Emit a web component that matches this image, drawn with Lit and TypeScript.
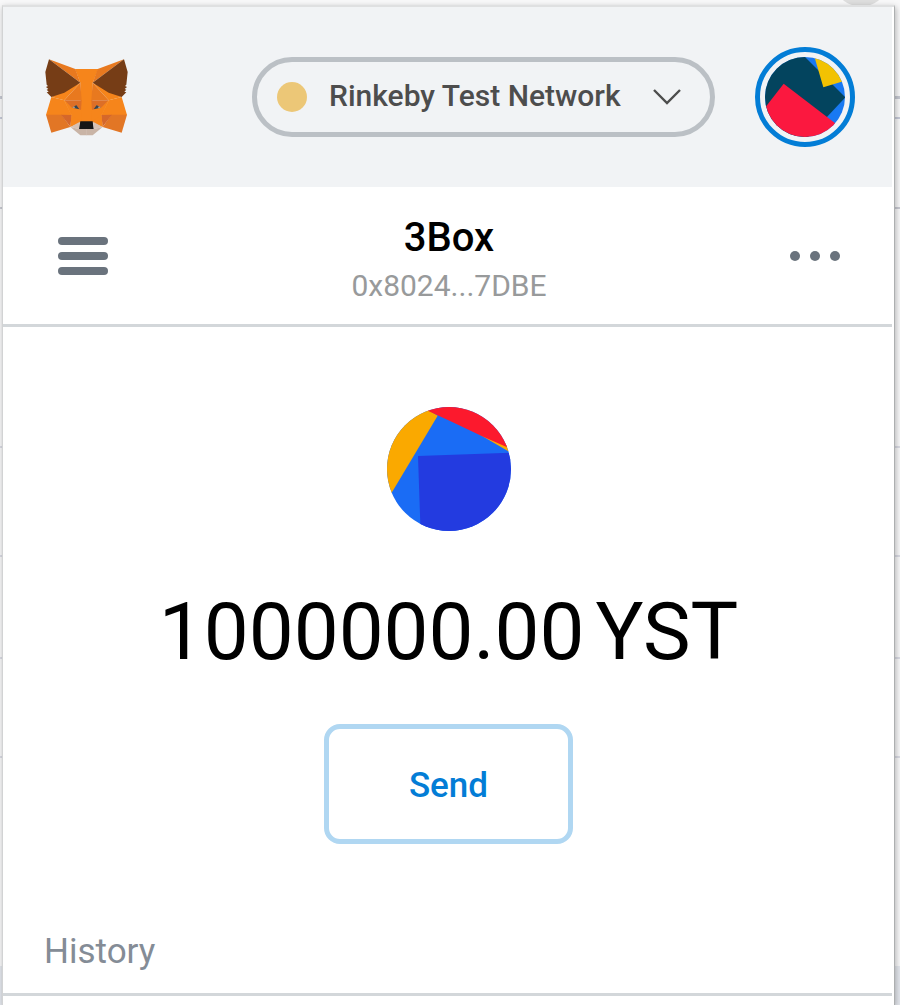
import { LitElement, html, svg, css } from "lit";
import { customElement, property } from "lit/decorators.js";

@customElement("fox-logo")
class FoxLogo extends LitElement {
  static styles = css`
    :host {
      display: block;
      flex: none;
      width: 83px;
    }
    svg {
      display: block;
      width: 100%;
    }
  `;

  // One half of the head; the other half is its mirror image.
  private half() {
    return svg`
      <polygon fill="#e8791f" points="57,42 136,71 151,112" />
      <polygon fill="#f6851b" points="64,155 151,112 103,165" />
      <polygon fill="#763d16" points="57,42 151,112 103,142 64,155 50,141 56,139 50,133 55,131 48,125 54,122 50,118 46,80" />
      <polygon fill="#f6851b" points="64,155 103,165 125,209 48,209" />
      <polygon fill="#e27625" points="48,208 95,208 121,245 64,262" />
      <polygon fill="#f6851b" points="103,165 153,185 155,230 121,245 124,209" />
      <polygon fill="#d5672a" points="93,208 125,209 121,244" />
      <polygon fill="#f6851b" points="125,209 153,229 121,244" />
      <polygon fill="#e8791f" points="151,112 155,165 103,165" />
      <polygon fill="#dd6f27" points="103,165 155,165 153,194 148,192 139,179 125,187" />
      <polygon fill="#f6851b" points="103,165 125,187 124,209" />
      <polygon fill="#334454" points="127,187 139,179 148,192" />
      <polygon fill="#a9a39d" points="127,187 132,183 136,189" />
      <polygon fill="#d7c1b3" points="121,245 150,229 147,251" />
      <polygon fill="#c9b4a6" points="121,245 147,251 170,251 170,270 151,270" />
    `;
  }

  render() {
    return html`
      <svg viewBox="45 41 249 231" role="img" aria-label="Fox">
        <polygon fill="#f6851b" points="135,71 205,71 188,112 186,232 153,232 151,112" />
        <g>${this.half()}</g>
        <g transform="translate(339 0) scale(-1 1)">${this.half()}</g>
        <polygon fill="#161616" points="151,228 188,228 191,251 147,251" />
      </svg>
    `;
  }
}

@customElement("app-root")
class AppRoot extends LitElement {
  static styles = css`
    :host {
      --line: #d3d7da;
      --accent: #037dd6;
      box-sizing: border-box;
      display: flex;
      flex-direction: column;
      min-height: 100vh;
      padding: 5px 5px 0 2px;
      font-family: Roboto, "Noto Sans", sans-serif;
      background:
        radial-gradient(circle at calc(100% - 39px) -22px, #dedede 28px, transparent 29px),
        linear-gradient(#c6c9d2, #c6c9d2) 0 96px / 100% 3px no-repeat,
        linear-gradient(#c6cad8, #c6cad8) 0 117px / 100% 2px no-repeat,
        linear-gradient(#c9cad2, #c9cad2) 0 207px / 100% 2px no-repeat,
        linear-gradient(#dadbe4, #dadbe4) 0 446px / 100% 2px no-repeat,
        linear-gradient(#dadbe4, #dadbe4) 0 555px / 100% 2px no-repeat,
        linear-gradient(#dadbe4, #dadbe4) 0 657px / 100% 2px no-repeat,
        linear-gradient(#dadbe4, #dadbe4) 0 756px / 100% 2px no-repeat,
        linear-gradient(#e4e7ed, #e4e7ed) 0 966px / 100% 100% no-repeat,
        #f8f8f9;
    }
    button,
    select {
      margin: 0;
      padding: 0;
      border: 0;
      background: none;
      font: inherit;
      color: inherit;
      cursor: pointer;
    }
    svg {
      display: block;
    }
    .popup {
      flex: 1;
      padding-right: 2px;
      background: #fff;
      border: 1px solid #d2d3d4;
      border-top: 2px solid #dfe0e1;
      border-right-color: #adafb0;
      border-bottom: 0;
      box-shadow: 1px 2px 6px rgba(0, 0, 0, 0.28);
    }
    .header {
      display: flex;
      align-items: center;
      gap: 40px;
      padding: 40px 37px 40px 42px;
      background: #f1f3f5;
    }
    .network {
      box-sizing: border-box;
      display: grid;
      grid-template-columns: 30px 1fr 28px;
      align-items: center;
      width: 463px;
      margin-left: auto;
      border: 5px solid #bbc0c5;
      border-radius: 40px;
      padding: 0 29px 0 20px;
    }
    .dot {
      grid-area: 1 / 1;
      width: 30px;
      height: 30px;
      border-radius: 50%;
      background: #ecc777;
    }
    .network select {
      grid-area: 1 / 1 / 2 / -1;
      appearance: none;
      height: 70px;
      padding: 0 0 3px 52px;
      font-size: 30px;
      font-weight: 500;
      color: #4d4d4d;
    }
    .chevron {
      grid-area: 1 / 3;
      pointer-events: none;
    }
    .account {
      flex: none;
      padding: 5px;
      border: 5px solid var(--accent);
      border-radius: 50%;
    }
    .round {
      border-radius: 50%;
    }
    .menu {
      display: flex;
      align-items: center;
      justify-content: space-between;
      padding: 0 52px 0 55px;
      border-bottom: 3px solid var(--line);
    }
    .identity {
      padding: 27px 0 14px;
      text-align: center;
      line-height: 48px;
    }
    .name {
      margin: 0;
      font-size: 40px;
      font-weight: 500;
      color: #000;
    }
    .address {
      font-size: 30px;
      color: #989a9b;
    }
    .asset {
      display: flex;
      flex-direction: column;
      align-items: center;
      padding: 80px 0 0 2px;
    }
    .balance {
      display: flex;
      gap: 11px;
      margin: 53px 0 44px;
      font-size: 80px;
      line-height: 96px;
      color: #000;
    }
    .send {
      box-sizing: border-box;
      width: 249px;
      height: 120px;
      padding-top: 3px;
      border: 5px solid #b0d7f2;
      border-radius: 16px;
      font-size: 35px;
      font-weight: 500;
      color: var(--accent);
    }
    .history {
      margin: 88px 0 0;
      padding: 0 41px 21px;
      border-bottom: 3px solid var(--line);
      font-size: 35px;
      font-weight: 400;
      line-height: 40px;
      color: #848c96;
    }
  `;

  @property() network = "Rinkeby Test Network";
  @property() name = "3Box";
  @property() address = "0x8024...7DBE";
  @property() amount = "1000000.00";
  @property() symbol = "YST";

  render() {
    return html`
      <main class="popup">
        <header class="header">
          <fox-logo></fox-logo>
          <div class="network">
            <select aria-label="Network">
              <option>${this.network}</option>
            </select>
            <span class="dot"></span>
            <svg class="chevron" width="28" height="18" viewBox="0 0 28 18" aria-hidden="true">
              <path d="M1 2L14 15L27 2" fill="none" stroke="#4d4d4d" stroke-width="2.4" />
            </svg>
          </div>
          <button class="account" aria-label="Accounts">
            <svg class="round" width="80" height="80" viewBox="0 0 240 240">
              <rect width="240" height="240" fill="#1879f2" />
              <polygon fill="#03445e" points="0,0 120,0 241,121 120,250 0,250" />
              <polygon fill="#f2c202" points="147,-5 175,91 245,70 245,-5" />
              <polygon fill="#fb183f" points="56,80 260,237 240,260 0,260 -10,165" />
            </svg>
          </button>
        </header>

        <section class="menu">
          <button aria-label="Menu">
            <svg width="50" height="38" viewBox="0 0 50 38">
              <g fill="#6a737d">
                <rect width="50" height="8" rx="4" />
                <rect y="15" width="50" height="8" rx="4" />
                <rect y="30" width="50" height="8" rx="4" />
              </g>
            </svg>
          </button>
          <div class="identity">
            <h1 class="name">${this.name}</h1>
            <div class="address">${this.address}</div>
          </div>
          <button aria-label="Account options">
            <svg width="50" height="10" viewBox="0 0 50 10">
              <g fill="#6a737d">
                <circle cx="5" cy="5" r="5" />
                <circle cx="25" cy="5" r="5" />
                <circle cx="45" cy="5" r="5" />
              </g>
            </svg>
          </button>
        </section>

        <section class="asset">
          <svg class="round" width="124" height="124" viewBox="0 0 372 372" aria-hidden="true">
            <rect width="372" height="372" fill="#1a6cf5" />
            <polygon fill="#faa900" points="0,0 110,0 152,26 14,257 0,280" />
            <polygon fill="#faa900" points="270,78 380,118 380,142" />
            <polygon fill="#fc192d" points="100,0 124,12 194,44 284,87 372,126 372,0" />
            <polygon fill="#233be0" points="93,147 380,137 380,380 101,380" />
          </svg>
          <div class="balance">
            <span>${this.amount}</span>
            <span>${this.symbol}</span>
          </div>
          <button class="send">Send</button>
        </section>

        <h2 class="history">History</h2>
      </main>
    `;
  }
}
